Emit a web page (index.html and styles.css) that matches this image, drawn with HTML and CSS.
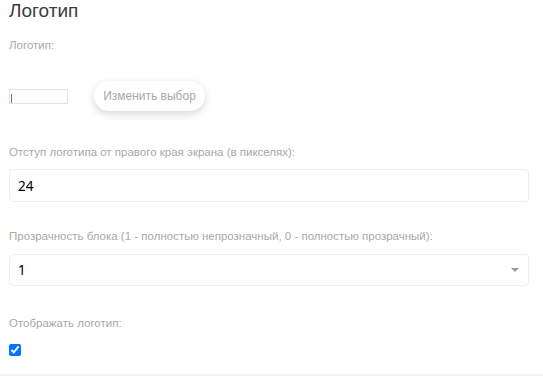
FILE: index.html
```html
<html>

<head>
    <meta charset="UTF-8" />
    <title>Логотип</title>
    <link rel="stylesheet" href="styles.css">
</head>

<body>
    <div class="panel">
        <h2 class="title">Логотип</h2>

        <label class="field-label">Логотип:</label>
        <div class="logo-row">
            <div class="logo-preview"><span class="broken"></span></div>
            <button class="btn-change">Изменить выбор</button>
        </div>

        <label class="field-label gap-big">Отступ логотипа от правого края экрана (в пикселях):</label>
        <div class="input-box">24</div>

        <label class="field-label gap-mid">Прозрачность блока (1 - полностью непрозначный, 0 - полностью прозрачный):</label>
        <div class="input-box select-box">1<span class="arrow"></span></div>

        <label class="field-label gap-mid2">Отображать логотип:</label>
        <input class="check" type="checkbox" checked>
    </div>
    <div class="bottom-line"></div>
</body>

</html>
```

FILE: styles.css
```css
body {
    margin: 0;
    padding: 0;
    background-color: #fff;
    font-family: 'Liberation Sans', Arial, sans-serif;
}

.panel {
    padding: 0 14px 0 9px;
    display: flex;
    flex-direction: column;
    align-items: flex-start;
}

.title {
    margin: 0;
    font-size: 19px;
    line-height: 22px;
    font-weight: normal;
    color: #3c3c3c;
}

.field-label {
    display: block;
    margin-top: 16px;
    font-size: 11.5px;
    line-height: 15px;
    color: #a8a8a8;
}

.gap-big {
    margin-top: 34px;
}

.gap-mid {
    margin-top: 27px;
}

.gap-mid2 {
    margin-top: 30px;
}

.logo-row {
    margin-top: 28px;
    display: flex;
    align-items: center;
    gap: 26px;
}

.logo-preview {
    width: 57px;
    height: 13px;
    border: 1px solid #e3e3e3;
    display: flex;
    align-items: flex-end;
}

.broken {
    display: block;
    width: 1px;
    height: 9px;
    margin-left: 1px;
    background: linear-gradient(#5b6fd6, #5b6fd6 50%, #e05050 50%);
}

.btn-change {
    width: 111px;
    height: 30px;
    border: none;
    border-radius: 15px;
    background-color: #fff;
    box-shadow: 0 3px 8px rgba(0, 0, 0, 0.16);
    font-family: 'Liberation Sans', Arial, sans-serif;
    font-size: 12px;
    color: #a8a8a8;
    padding: 0;
}

.input-box {
    box-sizing: border-box;
    align-self: stretch;
    margin-top: 9px;
    height: 33px;
    border: 1px solid #eee;
    border-radius: 4px;
    padding: 0 8px;
    display: flex;
    align-items: center;
    font-family: 'Noto Sans', sans-serif;
    font-size: 13.5px;
    color: #000;
}

.select-box {
    margin-top: 10px;
    height: 32px;
    justify-content: space-between;
    padding-right: 9px;
}

.arrow {
    width: 0;
    height: 0;
    border-left: 4px solid transparent;
    border-right: 4px solid transparent;
    border-top: 4px solid #999;
}

.check {
    margin: 13px 0 0 0;
    width: 12px;
    height: 12px;
    accent-color: #0075ff;
}

.bottom-line {
    margin-top: 18px;
    height: 2px;
    background-color: #f0f0f5;
}
```
